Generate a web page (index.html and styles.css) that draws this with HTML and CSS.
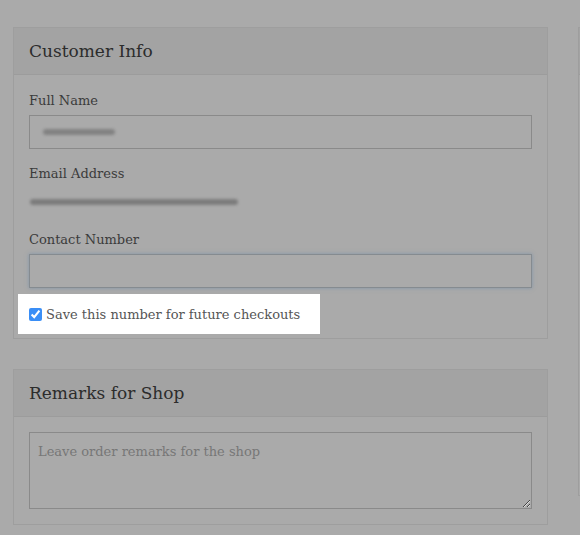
FILE: index.html
```html
<!DOCTYPE html>
<html lang="en">
<head>
<meta charset="utf-8">
<title>Checkout</title>
<link rel="stylesheet" href="styles.css">
</head>
<body>
<div class="page">
  <div class="col-main">
    <section class="panel">
      <header class="panel-head"><h2 class="panel-title">Customer Info</h2></header>
      <div class="panel-body">
        <div class="group">
          <label class="label">Full Name</label>
          <div class="input"><span class="smudge smudge-name"></span></div>
        </div>
        <div class="group">
          <label class="label">Email Address</label>
          <div class="static"><span class="smudge smudge-email"></span></div>
        </div>
        <div class="group">
          <label class="label">Contact Number</label>
          <div class="input input-focus"></div>
        </div>
        <label class="highlight">
          <input type="checkbox" class="check" checked>
          <span class="highlight-text">Save this number for future checkouts</span>
        </label>
      </div>
    </section>
    <section class="panel panel-remarks">
      <header class="panel-head"><h2 class="panel-title">Remarks for Shop</h2></header>
      <div class="panel-body panel-body-remarks">
        <textarea class="textarea" placeholder="Leave order remarks for the shop"></textarea>
      </div>
    </section>
  </div>
  <div class="col-side">
    <section class="panel panel-side">
      <header class="panel-head"></header>
      <div class="panel-body"></div>
    </section>
  </div>
</div>
</body>
</html>
```
FILE: styles.css
```css
html, body {
  margin: 0;
  padding: 0;
  background: #aaaaaa;
  overflow: hidden;
}
body {
  font-family: "DejaVu Serif", "Liberation Serif", serif;
  color: #3a3a3a;
}
.page {
  display: flex;
  gap: 30px;
  padding: 27px 0 0 13px;
  width: 580px;
  box-sizing: border-box;
  overflow: hidden;
}
.col-main {
  width: 535px;
  flex: none;
}
.col-side {
  flex: 1;
  min-width: 0;
}
.panel {
  border: 1px solid #9e9e9e;
}
.panel-side {
  border-right: none;
}
.panel-remarks {
  margin-top: 30px;
}
.panel-head {
  height: 46px;
  background: #a3a3a3;
  border-bottom: 1px solid #9c9c9c;
  display: flex;
  align-items: center;
  padding: 0 15px;
}
.panel-side .panel-head {
  padding: 0;
}
.panel-title {
  margin: 0;
  font-weight: normal;
  font-size: 17px;
  color: #2c2c2c;
}
.panel-body {
  padding: 16px 15px 4px;
}
.panel-side .panel-body {
  height: 420px;
  padding: 0;
}
.panel-body-remarks {
  padding: 15px 15px 15px;
}
.group {
  margin-bottom: 15px;
}
.label {
  display: block;
  font-size: 13px;
  line-height: 20px;
  margin-bottom: 4px;
  color: #3b3b3b;
}
.input {
  height: 32px;
  border: 1px solid #8a8a8a;
  display: flex;
  align-items: center;
  padding: 0 13px;
}
.input-focus {
  border-color: #858b90;
  box-shadow: 0 0 4px rgba(95, 130, 165, 0.55);
}
.static {
  height: 27px;
  display: flex;
  align-items: center;
}
.smudge {
  display: block;
  background: #747474;
  filter: blur(1.6px);
  border-radius: 3px;
}
.smudge-name {
  width: 72px;
  height: 6px;
  opacity: 0.75;
}
.smudge-email {
  width: 208px;
  height: 6px;
  margin-left: 1px;
  opacity: 0.85;
}
.group + .highlight {
  margin-top: -9px;
}
.highlight {
  display: inline-flex;
  align-items: center;
  gap: 4px;
  height: 40px;
  margin-left: -11px;
  padding: 0 20px 0 11px;
  background: #ffffff;
  position: relative;
  z-index: 2;
}
.check {
  width: 13px;
  height: 13px;
  margin: 1px 0 0;
  accent-color: #3a8ef6;
}
.highlight-text {
  font-size: 13px;
  color: #555555;
}
.textarea {
  display: block;
  box-sizing: border-box;
  width: 100%;
  height: 77px;
  border: 1px solid #8a8a8a;
  background: transparent;
  padding: 11px 8px;
  font-family: "DejaVu Serif", "Liberation Serif", serif;
  font-size: 13px;
  color: #3a3a3a;
  resize: vertical;
  margin: 0;
}
.textarea::placeholder {
  color: #777777;
}
```
